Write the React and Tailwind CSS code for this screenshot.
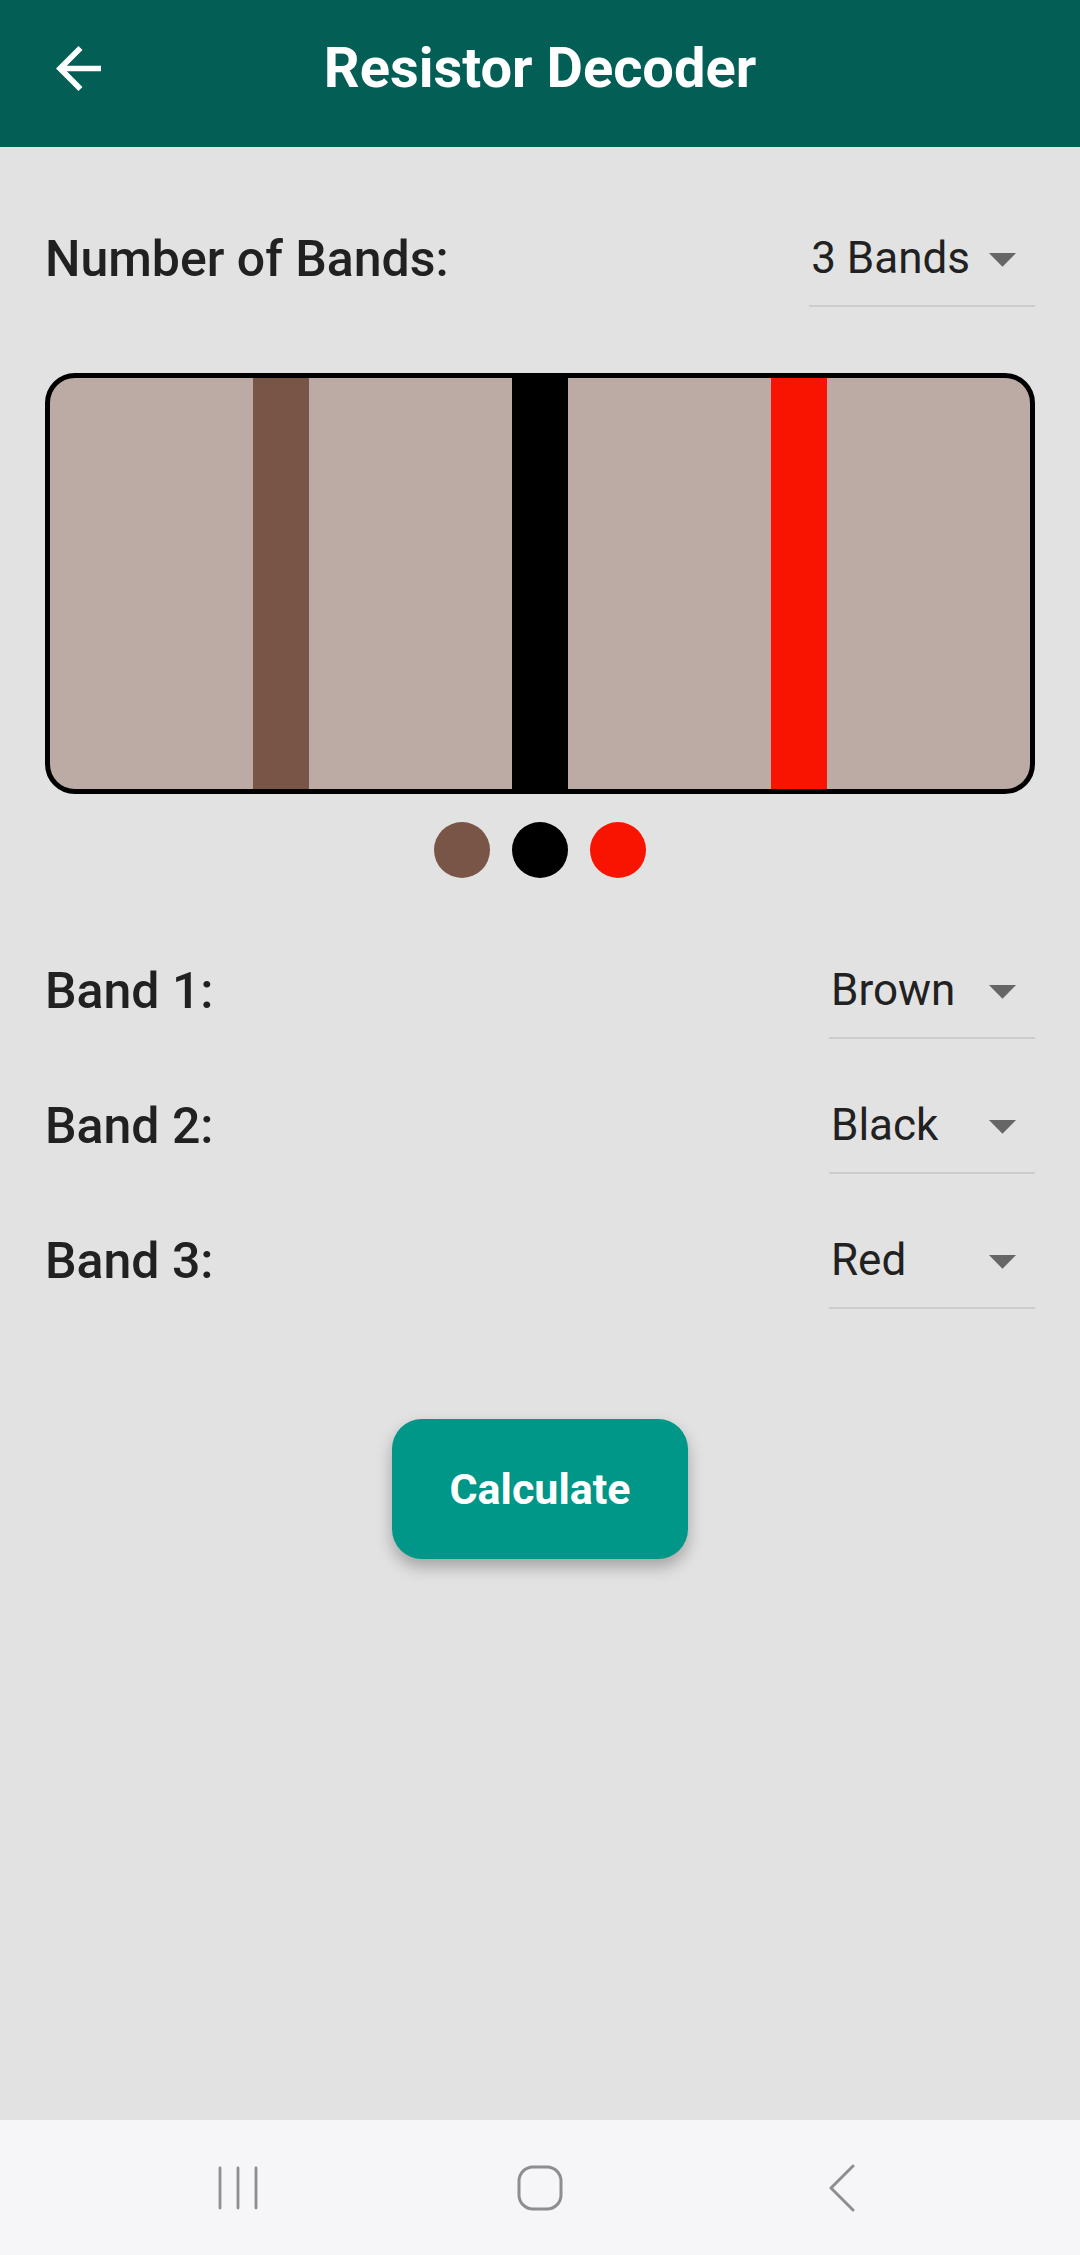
import { useState } from 'react'

const COLORS = {
  Black: '#000000',
  Brown: '#795548',
  Red: '#f81400',
}

function DropArrow() {
  return (
    <svg viewBox="0 0 24 24" className="w-[65px] h-[65px] shrink-0" fill="#666666">
      <path d="M7 10l5 5 5-5z" />
    </svg>
  )
}

function Dropdown({ value, fixed }) {
  return (
    <div className={`h-[96px] flex items-center border-b-2 border-[#cdcdcd] ${fixed ? 'w-[206px] justify-between' : ''}`}>
      <span className="text-[44px] text-[#212121] leading-none pl-[2px]">{value}</span>
      <DropArrow />
    </div>
  )
}

function Row({ label, value, fixed }) {
  return (
    <div className="flex items-center justify-between">
      <span className="text-[50px] font-medium text-[#212121] leading-none">{label}</span>
      <Dropdown value={value} fixed={fixed} />
    </div>
  )
}

export default function App() {
  const [bands] = useState(['Brown', 'Black', 'Red'])

  return (
    <div className="w-[1080px] h-[2255px] flex flex-col bg-[#e2e2e2]" style={{ fontFamily: 'Roboto, sans-serif' }}>
      <header className="h-[147px] shrink-0 bg-[#035f56] flex items-center pb-[11px]">
        <div className="w-[101px] pl-[56px] flex items-center">
          <svg viewBox="4 4 16 16" className="w-[45px] h-[45px]" fill="#ffffff">
            <path d="M20 11H7.83l5.59-5.59L12 4l-8 8 8 8 1.41-1.41L7.83 13H20v-2z" />
          </svg>
        </div>
        <h1 className="flex-1 text-center text-white font-bold text-[56px] leading-none">Resistor Decoder</h1>
        <div className="w-[101px]" />
      </header>

      <main className="flex-1 px-[45px] flex flex-col">
        <div className="mt-[64px]">
          <Row label="Number of Bands:" value="3 Bands" />
        </div>

        <div className="mt-[66px] h-[421px] border-[5px] border-black rounded-[30px] bg-[#bbaba4] overflow-hidden flex justify-evenly">
          {bands.map((b, i) => (
            <div key={i} className="w-[56px] h-full" style={{ backgroundColor: COLORS[b] }} />
          ))}
        </div>

        <div className="mt-[28px] flex justify-center gap-[22px]">
          {bands.map((b, i) => (
            <div key={i} className="w-[56px] h-[56px] rounded-full" style={{ backgroundColor: COLORS[b] }} />
          ))}
        </div>

        <div className="mt-[65px] flex flex-col gap-[39px]">
          {bands.map((b, i) => (
            <Row key={i} label={`Band ${i + 1}:`} value={b} fixed />
          ))}
        </div>

        <div className="mt-[110px] flex justify-center">
          <button className="w-[296px] h-[140px] rounded-[30px] bg-[#009688] text-white font-bold text-[43px] shadow-[0_8px_16px_rgba(0,0,0,0.28)]">
            Calculate
          </button>
        </div>
      </main>

      <nav className="h-[135px] shrink-0 bg-[#f6f6f8] flex items-center justify-center">
        <div className="w-[302px] flex justify-center">
          <svg width="42" height="46" viewBox="0 0 42 46" stroke="#8e8e8e" strokeWidth="2.8" strokeLinecap="round">
            <line x1="3" y1="3" x2="3" y2="43" />
            <line x1="21" y1="3" x2="21" y2="43" />
            <line x1="39" y1="3" x2="39" y2="43" />
          </svg>
        </div>
        <div className="w-[302px] flex justify-center">
          <svg width="46" height="46" viewBox="0 0 46 46" fill="none" stroke="#8e8e8e" strokeWidth="3">
            <rect x="2" y="2" width="42" height="42" rx="14" />
          </svg>
        </div>
        <div className="w-[302px] flex justify-center">
          <svg width="28" height="48" viewBox="0 0 28 48" fill="none" stroke="#8e8e8e" strokeWidth="3" strokeLinecap="round" strokeLinejoin="round">
            <path d="M25 2 L3 24 L25 46" />
          </svg>
        </div>
      </nav>
    </div>
  )
}
